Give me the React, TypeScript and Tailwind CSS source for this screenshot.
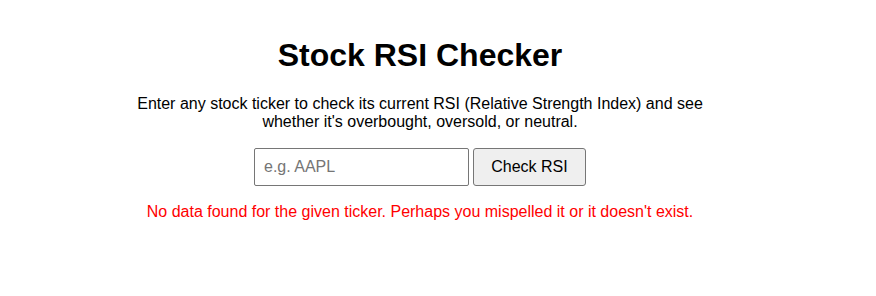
import React, { useState } from 'react';

export default function App() {
  const [ticker, setTicker] = useState('');

  return (
    <div className="min-h-[296px] bg-white pr-[36px] font-['Liberation_Sans',Arial,sans-serif] text-black">
      <div className="mx-auto max-w-[600px] pt-[37px] text-center">
        <h1 className="text-[32px] font-bold leading-[37px]">Stock RSI Checker</h1>
        <p className="mt-[21px] text-[16px] leading-[18px]">
          Enter any stock ticker to check its current RSI (Relative Strength Index) and see whether it's overbought, oversold, or neutral.
        </p>
        <div className="mt-[17px] flex justify-center gap-[4px]">
          <input
            type="text"
            value={ticker}
            onChange={(e) => setTicker(e.target.value)}
            placeholder="e.g. AAPL"
            className="h-[38px] w-[215px] rounded-[2px] border border-[#767676] px-[9px] text-[16px] placeholder:text-[#757575] focus:outline-none"
          />
          <button className="h-[38px] w-[113px] rounded-[3px] border border-[#767676] bg-[#efefef] text-[16px]">
            Check RSI
          </button>
        </div>
        <p className="mt-[17px] text-[16px] leading-[18px] text-[#ff0000] whitespace-nowrap">
          No data found for the given ticker. Perhaps you mispelled it or it doesn't exist.
        </p>
      </div>
    </div>
  );
}
